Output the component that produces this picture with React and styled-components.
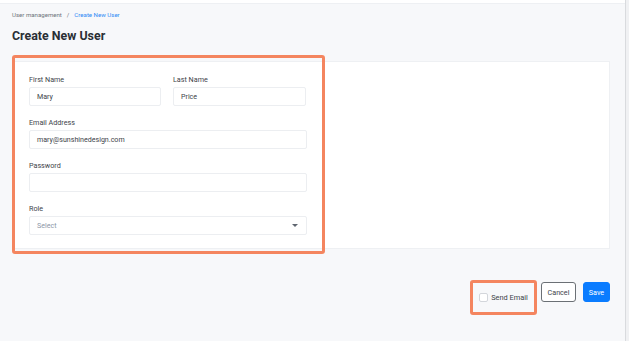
import styled, { createGlobalStyle } from 'styled-components';

const GlobalStyle = createGlobalStyle`
  html, body {
    margin: 0;
    padding: 0;
    background: #f7f8fa;
    font-family: Roboto, "Liberation Sans", sans-serif;
    color: #2d3339;
  }
`;

const Shell = styled.div`
  display: flex;
  min-height: 341px;
`;

const Main = styled.div`
  flex: 1;
  display: flex;
  flex-direction: column;
`;

const ScrollTrack = styled.div`
  width: 3px;
  background: #f0f1f3;
  border-left: 1px solid #d9dbde;
`;

const TopStrip = styled.div`
  height: 3px;
  background: #ffffff;
  border-bottom: 1px solid #eef0f3;
`;

const Content = styled.div`
  padding: 7px 15px 0 12px;
`;

const Breadcrumb = styled.div`
  display: flex;
  gap: 5px;
  font-size: 6.1px;
  line-height: 8px;
`;

const Crumb = styled.span`
  color: ${p => (p.$active ? '#2f8af5' : '#6f757c')};
`;

const Title = styled.h1`
  margin: 9px 0 0;
  font-size: 12.4px;
  line-height: 16px;
  font-weight: 700;
  color: #2a2f35;
`;

const Card = styled.div`
  margin-top: 17px;
  width: 598px;
  height: 188px;
  background: #ffffff;
  border: 1px solid #eef0f3;
  box-sizing: border-box;
  display: flex;
`;

const FormColumn = styled.div`
  position: relative;
  width: 308px;
  box-sizing: border-box;
  padding: 13px 14px 0 16px;
  display: flex;
  flex-direction: column;
  gap: 12px;
`;

const Highlight = styled.div`
  position: absolute;
  top: -7px;
  bottom: -6px;
  left: -1px;
  right: -4px;
  border: 3px solid #f4855f;
  border-radius: 3px;
  pointer-events: none;
`;

const Row = styled.div`
  display: grid;
  grid-template-columns: 132px 133px;
  gap: 12px;
`;

const Field = styled.div`
  display: flex;
  flex-direction: column;
  gap: 2px;
`;

const Label = styled.label`
  font-size: 7.2px;
  line-height: 10px;
  color: #3d4349;
`;

const Input = styled.div`
  height: 19px;
  box-sizing: border-box;
  border: 1px solid #eceef1;
  border-radius: 2px;
  padding: 0 7px;
  display: flex;
  align-items: center;
  justify-content: space-between;
  font-size: 7.1px;
  color: ${p => (p.$placeholder ? '#8d97a8' : '#3d4349')};
`;

const Caret = styled.span`
  width: 0;
  height: 0;
  border-left: 3px solid transparent;
  border-right: 3px solid transparent;
  border-top: 3px solid #5f6670;
  margin-right: 1px;
`;

const Footer = styled.div`
  margin-top: 31px;
  width: 598px;
  display: flex;
  justify-content: flex-end;
  align-items: flex-start;
  gap: 4px;
`;

const SendEmailBox = styled.div`
  width: 67px;
  height: 35px;
  box-sizing: border-box;
  border: 3px solid #f4855f;
  border-radius: 3px;
  display: flex;
  align-items: center;
  justify-content: center;
  gap: 3px;
  font-size: 7.4px;
  color: #3d4349;
`;

const Check = styled.span`
  width: 9px;
  height: 9px;
  box-sizing: border-box;
  border: 1px solid #d3d6db;
  border-radius: 2px;
  background: #ffffff;
`;

const Buttons = styled.div`
  display: flex;
  gap: 7px;
  margin-top: 2px;
`;

const Button = styled.button`
  height: 20px;
  width: ${p => (p.$primary ? '27px' : '35px')};
  box-sizing: border-box;
  padding: 0;
  border-radius: 3px;
  font-family: inherit;
  font-size: 7.2px;
  border: 1px solid ${p => (p.$primary ? '#0a7cff' : '#6b7075')};
  background: ${p => (p.$primary ? '#0a7cff' : '#ffffff')};
  color: ${p => (p.$primary ? '#ffffff' : '#3d4349')};
`;

export default function App() {
  return (
    <>
      <GlobalStyle />
      <Shell>
        <Main>
          <TopStrip />
          <Content>
            <Breadcrumb>
              <Crumb>User management</Crumb>
              <Crumb>/</Crumb>
              <Crumb $active>Create New User</Crumb>
            </Breadcrumb>
            <Title>Create New User</Title>
            <Card>
              <FormColumn>
                <Highlight />
                <Row>
                  <Field>
                    <Label>First Name</Label>
                    <Input>Mary</Input>
                  </Field>
                  <Field>
                    <Label>Last Name</Label>
                    <Input>Price</Input>
                  </Field>
                </Row>
                <Field>
                  <Label>Email Address</Label>
                  <Input>mary@sunshinedesign.com</Input>
                </Field>
                <Field>
                  <Label>Password</Label>
                  <Input />
                </Field>
                <Field>
                  <Label>Role</Label>
                  <Input $placeholder>
                    Select
                    <Caret />
                  </Input>
                </Field>
              </FormColumn>
            </Card>
            <Footer>
              <SendEmailBox>
                <Check />
                Send Email
              </SendEmailBox>
              <Buttons>
                <Button>Cancel</Button>
                <Button $primary>Save</Button>
              </Buttons>
            </Footer>
          </Content>
        </Main>
        <ScrollTrack />
      </Shell>
    </>
  );
}
